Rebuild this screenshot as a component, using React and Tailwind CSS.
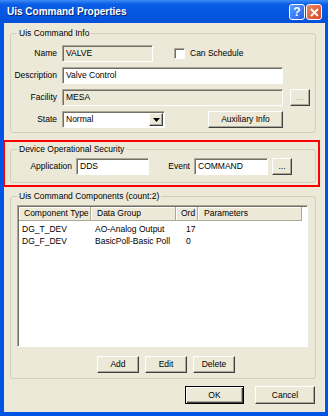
import React from "react";

// classic XP-ish bevels
const btn =
  "flex items-center justify-center bg-[#ECE9D8] border border-t-white border-l-white border-r-[#404040] border-b-[#404040] shadow-[inset_-1px_-1px_0_#ACA899]";
const sunken =
  "h-[17px] flex items-center px-[3px] border border-t-[#ACA899] border-l-[#ACA899] border-r-white border-b-white shadow-[inset_1px_1px_0_#716F64]";
const groupBox = "border border-[#D0D0BF] rounded-[3px] px-0 m-0 min-w-0";
const legend = "ml-[6px] px-[2px] leading-[12px]";

function Field({ value, width, disabled }) {
  return (
    <div
      className={`${sunken} ${width} ${disabled ? "bg-[#ECE9D8]" : "bg-white"}`}
    >
      {value}
    </div>
  );
}

function TitleBar() {
  return (
    <div className="h-[23px] flex items-center pl-[7px] pr-[6px] bg-[linear-gradient(to_bottom,#3D8DF5_0%,#0B5EE6_18%,#0556E2_60%,#0450D8_100%)]">
      <span className="flex-1 text-white font-bold text-[10px] [text-shadow:1px_1px_0_#0A246A]">
        Uis Command Properties
      </span>
      <div className="flex items-center gap-[1px] mt-[1px]">
        <div className="w-[16px] h-[16px] rounded-[3px] border border-white bg-[linear-gradient(135deg,#5A9BFF,#2562E8)] flex items-center justify-center text-white font-bold text-[12px] leading-none">
          ?
        </div>
        <div className="w-[16px] h-[16px] rounded-[3px] border border-white bg-[linear-gradient(135deg,#E98A62,#D8451F)] flex items-center justify-center">
          <svg width="9" height="9" viewBox="0 0 9 9">
            <path d="M1 1 L8 8 M8 1 L1 8" stroke="white" strokeWidth="1.8" />
          </svg>
        </div>
      </div>
    </div>
  );
}

function InfoGroup() {
  return (
    <fieldset className={`${groupBox} mt-[4px]`}>
      <legend className={legend}>Uis Command Info</legend>
      <div className="flex flex-col gap-[5px] pt-[6px] pb-[4px]">
        <div className="flex items-center gap-[5px]">
          <span className="w-[46px] text-right">Name</span>
          <Field value="VALVE" width="w-[91px]" disabled />
          <div className="ml-[16px] w-[11px] h-[11px] bg-white border border-t-[#ACA899] border-l-[#ACA899] border-r-white border-b-white shadow-[inset_1px_1px_0_#716F64]" />
          <span>Can Schedule</span>
        </div>
        <div className="flex items-center gap-[5px]">
          <span className="w-[46px] text-right">Description</span>
          <Field value="Valve Control" width="w-[221px]" />
        </div>
        <div className="flex items-center gap-[5px]">
          <span className="w-[46px] text-right">Facility</span>
          <Field value="MESA" width="w-[221px]" disabled />
          <div className={`${btn} ml-[2px] w-[20px] h-[17px] text-[#ACA899]`}>...</div>
        </div>
        <div className="flex items-center gap-[5px]">
          <span className="w-[46px] text-right">State</span>
          <div className={`${sunken} w-[103px] bg-white pr-[1px]`}>
            <span className="flex-1">Normal</span>
            <div className={`${btn} w-[14px] h-[13px]`}>
              <svg width="7" height="4" viewBox="0 0 7 4">
                <path d="M0 0 H7 L3.5 4 Z" fill="black" />
              </svg>
            </div>
          </div>
          <div className={`${btn} ml-[38px] w-[75px] h-[17px]`}>Auxiliary Info</div>
        </div>
      </div>
    </fieldset>
  );
}

function SecurityGroup() {
  return (
    <div className="relative mt-[10px]">
      <fieldset className={groupBox}>
        <legend className={legend}>Device Operational Security</legend>
        <div className="flex items-center pl-[15px] pt-[3px] pb-[7px]">
          <span className="w-[46px] text-right">Application</span>
          <Field value="DDS" width="ml-[4px] w-[73px]" />
          <span className="ml-[17px] w-[24px] text-right">Event</span>
          <Field value="COMMAND" width="ml-[4px] w-[74px]" />
          <div className={`${btn} ml-[4px] w-[20px] h-[17px]`}>...</div>
        </div>
      </fieldset>
      <div className="absolute -left-[7px] -right-[4px] -top-[3px] -bottom-[4px] border-2 border-[#FF0000] pointer-events-none" />
    </div>
  );
}

const cols = [
  { name: "Component Type", w: "w-[72px]", pl: "pl-[5px]" },
  { name: "Data Group", w: "w-[85px]", pl: "pl-[6px]" },
  { name: "Ord", w: "w-[22px]", pl: "pl-[5px]" },
  { name: "Parameters", w: "flex-1", pl: "pl-[6px]" },
];

const rows = [
  ["DG_T_DEV", "AO-Analog Output", "17"],
  ["DG_F_DEV", "BasicPoll-Basic Poll", "0"],
];

function ComponentsGroup() {
  return (
    <fieldset className={`${groupBox} mt-[7px]`}>
      <legend className={legend}>Uis Command Components (count:2)</legend>
      <div className="pl-[6px] pr-[7px] pt-[3px] pb-[5px]">
        <div className="h-[142px] bg-white border border-t-[#ACA899] border-l-[#ACA899] border-r-white border-b-white shadow-[inset_1px_1px_0_#716F64] pl-[1px] pt-[1px] flex flex-col">
          <div className="flex h-[14px] pr-[5px]">
            {cols.map((c) => (
              <div
                key={c.name}
                className={`${c.w} ${c.pl} flex items-center bg-[#ECE9D8] border-b border-r border-b-[#ACA899] border-r-[#ACA899] shadow-[inset_1px_1px_0_white]`}
              >
                {c.name}
              </div>
            ))}
          </div>
          <div className="mt-[2px] flex flex-col">
            {rows.map((r) => (
              <div key={r[0]} className="flex h-[12px] items-center">
                <span className="w-[72px] pl-[3px]">{r[0]}</span>
                <span className="w-[85px] pl-[4px]">{r[1]}</span>
                <span className="w-[22px] pl-[10px]">{r[2]}</span>
              </div>
            ))}
          </div>
        </div>
        <div className="flex justify-center gap-[6px] pl-[7px] mt-[9px]">
          <div className={`${btn} w-[42px] h-[17px]`}>Add</div>
          <div className={`${btn} w-[42px] h-[17px]`}>Edit</div>
          <div className={`${btn} w-[42px] h-[17px]`}>Delete</div>
        </div>
      </div>
    </fieldset>
  );
}

export default function App() {
  return (
    <div className="w-[328px] h-[416px] flex flex-col bg-[#0055E5] font-['Liberation_Sans',Arial,sans-serif] text-[8.5px] text-black">
      <TitleBar />
      <div className="flex-1 ml-[4px] mr-[3px] mb-[4px] bg-[#ECE9D8] flex flex-col pl-[6px] pr-[8px] border-r border-r-[#F5F4EE]">
        <InfoGroup />
        <SecurityGroup />
        <ComponentsGroup />
        <div className="flex justify-end gap-[11px] mt-[7px] mr-[1px]">
          <div className="w-[59px] h-[18px] flex items-center justify-center bg-[#ECE9D8] border border-black shadow-[inset_1px_1px_0_white,inset_-1px_-1px_0_#404040,inset_-2px_-2px_0_#ACA899]">
            OK
          </div>
          <div className={`${btn} w-[60px] h-[18px]`}>Cancel</div>
        </div>
      </div>
    </div>
  );
}
